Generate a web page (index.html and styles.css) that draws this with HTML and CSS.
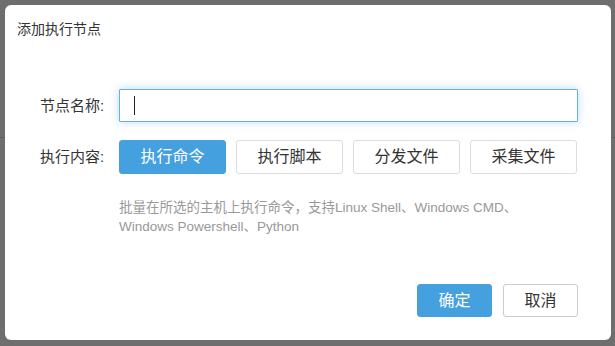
FILE: index.html
```html
<!doctype html>
<html>
<head>
<meta charset="utf-8">
<title>添加执行节点</title>
<link rel="stylesheet" href="styles.css">
</head>
<body>
<div class="mask">
	<div class="bg_line"></div>
	<div class="dialog">
		<div class="dlg_head">添加执行节点</div>
		<div class="dlg_body">
			<div class="form_row">
				<label class="lab">节点名称:</label>
				<div class="ipt"><span class="caret"></span></div>
			</div>
			<div class="form_row row_type">
				<label class="lab">执行内容:</label>
				<div class="type_list">
					<a href="javascript:;" class="btn btn_blue">执行命令</a>
					<a href="javascript:;" class="btn">执行脚本</a>
					<a href="javascript:;" class="btn">分发文件</a>
					<a href="javascript:;" class="btn">采集文件</a>
				</div>
			</div>
			<p class="tip">批量在所选的主机上执行命令，支持Linux Shell、Windows CMD、<br>Windows Powershell、Python</p>
		</div>
		<div class="dlg_foot">
			<a href="javascript:;" class="btn btn_blue btn_sm">确定</a>
			<a href="javascript:;" class="btn btn_sm">取消</a>
		</div>
	</div>
</div>
</body>
</html>
```
FILE: styles.css
```css
*{margin:0; padding:0; box-sizing:border-box;}
body{font-family:"Liberation Sans","Noto Sans CJK SC",sans-serif; font-size:14px; color:#333; background:#6e6e6e;}
.mask{width:615px; height:346px; padding:5px 4px 6px 5px; position:relative;}
.bg_line{position:absolute; left:0; right:0; top:137px; height:1px; background:#5e5e5e;}
.dialog{position:relative; height:335px; background:#fff; border-radius:6px; display:flex; flex-direction:column;}
.dlg_head{padding:14px 0 0 12px; height:84px; line-height:20px; font-size:14px; color:#333;}
.dlg_body{padding:0 33px 0 35px; flex:1;}
.form_row{display:flex; align-items:center;}
.lab{width:79px; line-height:20px; font-size:15px; color:#333;}
.ipt{flex:1; height:33px; border:1px solid #66afe9; box-shadow:0 0 8px rgba(102,175,233,.45); padding:6px 14px; border-radius:1px;}
.caret{display:block; width:1px; height:19px; background:#222;}
.row_type{margin-top:18px;}
.type_list{display:flex; gap:10px;}
.btn{display:block; width:107px; height:34px; line-height:32px; border:1px solid #ddd; border-radius:3px; text-align:center; text-decoration:none; color:#333; font-size:16px; background:#fff;}
.btn_blue{background:#45a0e0; border-color:#45a0e0; color:#fff;}
.tip{margin:24px 0 0 79px; font-size:13.5px; line-height:19px; color:#999;}
.dlg_foot{display:flex; justify-content:flex-end; gap:11px; padding:0 33px 23px 0;}
.btn_sm{width:75px; height:33px; line-height:31px;}
.dlg_foot .btn{border-color:#ccc;}
.dlg_foot .btn_blue{border-color:#45a0e0;}
```
